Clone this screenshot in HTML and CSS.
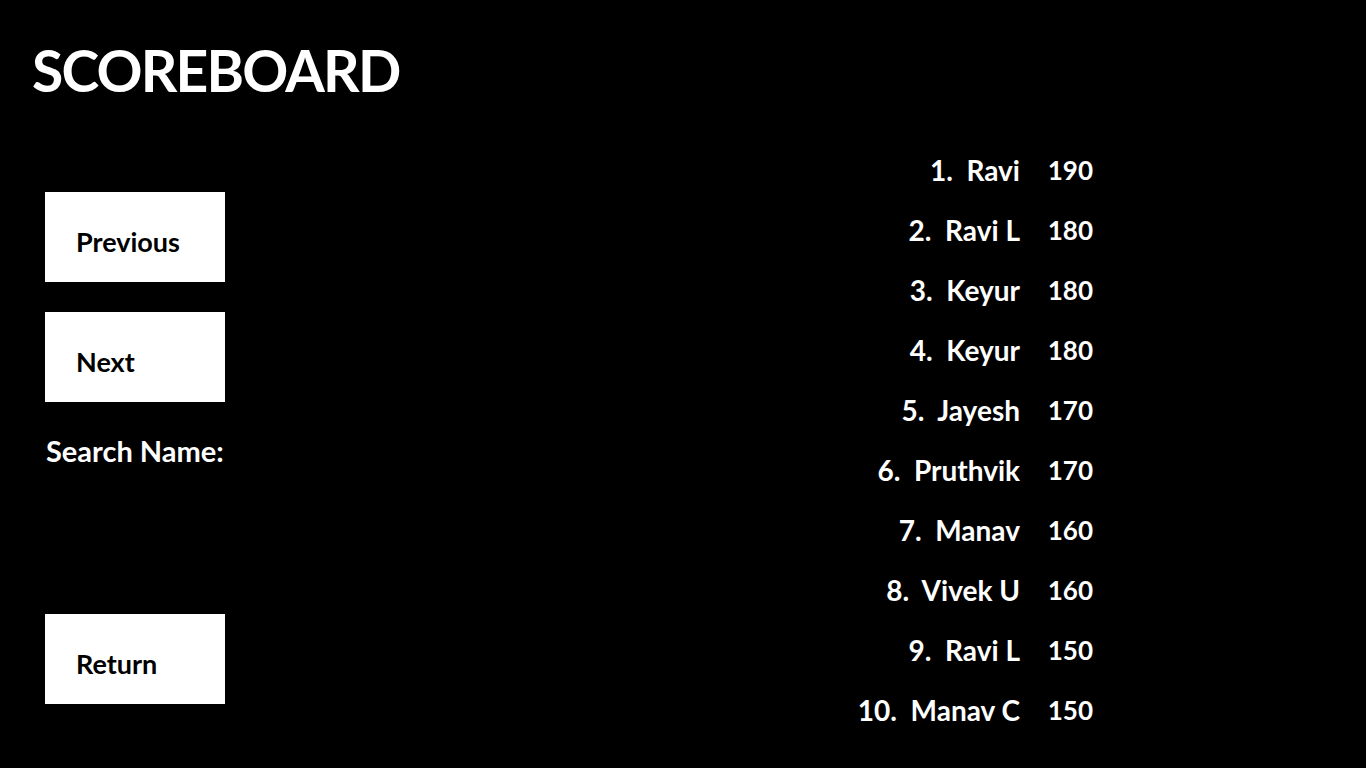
FILE: index.html
```html
<!DOCTYPE html>
<html lang="en">
<head>
<meta charset="utf-8">
<title>Scoreboard</title>
<link rel="stylesheet" href="styles.css">
</head>
<body>
<header class="header">
  <h1 class="title">SCOREBOARD</h1>
</header>
<main class="main">
  <section class="controls">
    <button class="btn">Previous</button>
    <button class="btn">Next</button>
    <label class="search-label">Search Name:</label>
    <button class="btn btn-return">Return</button>
  </section>
  <section class="board">
    <div class="row"><span class="name">1.&nbsp;&nbsp;Ravi</span><span class="score">190</span></div>
    <div class="row"><span class="name">2.&nbsp;&nbsp;Ravi L</span><span class="score">180</span></div>
    <div class="row"><span class="name">3.&nbsp;&nbsp;Keyur</span><span class="score">180</span></div>
    <div class="row"><span class="name">4.&nbsp;&nbsp;Keyur</span><span class="score">180</span></div>
    <div class="row"><span class="name">5.&nbsp;&nbsp;Jayesh</span><span class="score">170</span></div>
    <div class="row"><span class="name">6.&nbsp;&nbsp;Pruthvik</span><span class="score">170</span></div>
    <div class="row"><span class="name">7.&nbsp;&nbsp;Manav</span><span class="score">160</span></div>
    <div class="row"><span class="name">8.&nbsp;&nbsp;Vivek U</span><span class="score">160</span></div>
    <div class="row"><span class="name">9.&nbsp;&nbsp;Ravi L</span><span class="score">150</span></div>
    <div class="row"><span class="name">10.&nbsp;&nbsp;Manav C</span><span class="score">150</span></div>
  </section>
</main>
</body>
</html>
```
FILE: styles.css
```css
* { box-sizing: border-box; }
html, body {
  margin: 0;
  padding: 0;
  background: #000;
  color: #fff;
  font-family: "Lato", "Open Sans", sans-serif;
  width: 1366px;
  height: 768px;
  overflow: hidden;
}
.header {
  height: 141px;
  padding: 34px 0 0 32px;
}
.title {
  margin: 0;
  font-size: 57px;
  line-height: 72px;
  font-weight: 700;
  letter-spacing: -1.8px;
}
.main {
  display: flex;
  justify-content: space-between;
}
.controls {
  display: flex;
  flex-direction: column;
  align-items: flex-start;
  padding: 51px 0 0 45px;
}
.btn {
  width: 180px;
  height: 90px;
  border: none;
  background: #fff;
  color: #000;
  font-family: inherit;
  font-size: 27px;
  font-weight: 700;
  text-align: left;
  padding: 8px 0 0 31px;
  margin: 0 0 30px 0;
}
.search-label {
  font-size: 29px;
  font-weight: 700;
  line-height: 34px;
  margin: 2px 0 0 1px;
}
.btn-return {
  margin-top: 146px;
}
.board {
  display: grid;
  grid-template-columns: auto 73px;
  grid-auto-rows: 60px;
  margin-right: 273px;
  font-size: 28px;
  font-weight: 700;
}
.row {
  display: contents;
}
.name {
  text-align: right;
  line-height: 58px;
}
.score {
  text-align: right;
  line-height: 58px;
  font-size: 26px;
}
```
